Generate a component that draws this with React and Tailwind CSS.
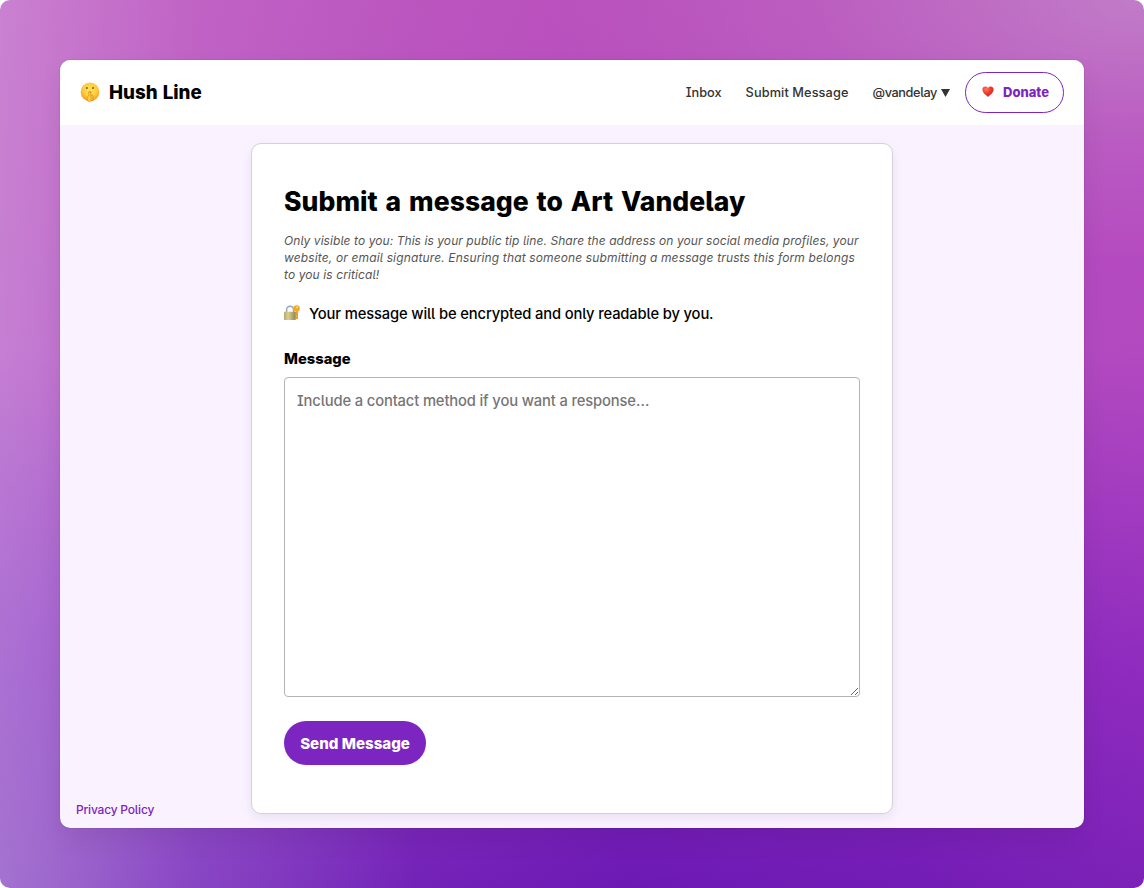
function HushFace() {
  return (
    <svg className="size-5 shrink-0 -translate-y-px" viewBox="0 0 20 20" aria-hidden="true">
      <defs>
        <radialGradient id="face" cx="50%" cy="40%" r="60%">
          <stop offset="0" stopColor="#ffe55c" />
          <stop offset="0.65" stopColor="#ffc93a" />
          <stop offset="1" stopColor="#ee961c" />
        </radialGradient>
      </defs>
      <circle cx="10" cy="9.9" r="9.3" fill="url(#face)" />
      <ellipse cx="6.9" cy="6" rx="0.8" ry="1" fill="#61401b" />
      <ellipse cx="13" cy="6" rx="0.8" ry="1" fill="#61401b" />
      <path d="M8.2 10.4Q10 9.6 11.8 10.4" fill="none" stroke="#b87a24" strokeWidth="0.6" />
      <path d="M9.2 9.6q.7-1 1.4 0l.1 4.1 1.5-.7q1.4.5.9 2.3-.3 3.7-3.7 4.4-2.3-.5-2.4-2.6-.1-2 1.6-3.4z" fill="#ffcb40" stroke="#d98518" strokeWidth="0.6" />
      <path d="M10.3 14.4l1.8-.3M10.2 15.9l2-.3M10 17.3l1.7-.2" stroke="#d08420" strokeWidth="0.5" />
    </svg>
  );
}

function LockAndKey() {
  return (
    <svg className="size-4 shrink-0" viewBox="0 0 16 16" aria-hidden="true">
      <defs>
        <linearGradient id="lock" x1="0" x2="1">
          <stop offset="0" stopColor="#b3a967" />
          <stop offset="0.35" stopColor="#d9d097" />
          <stop offset="1" stopColor="#8f8749" />
        </linearGradient>
      </defs>
      <path d="M2.6 7.4V4.7a3.5 3.5 0 0 1 7 0v2.7" fill="none" stroke="#93a7b5" strokeWidth="1.5" />
      <rect x="0" y="6.7" width="11.8" height="8.3" rx="0.8" fill="url(#lock)" />
      <path d="M12 5.5h2v8l-1 1.1-1.1-1.1v-1.2l.6-.6-.5-.7z" fill="#e3a02b" />
      <circle cx="12.6" cy="3.6" r="3.3" fill="#eeaa35" />
      <circle cx="13" cy="2.3" r="0.8" fill="#fff4d3" />
    </svg>
  );
}

function Heart() {
  return (
    <svg className="h-[11px] w-3 shrink-0 -translate-y-px" viewBox="0 0 12 11" aria-hidden="true">
      <defs>
        <radialGradient id="heart" cx="35%" cy="25%" r="75%">
          <stop offset="0" stopColor="#ff7864" />
          <stop offset="0.5" stopColor="#f33c2e" />
          <stop offset="1" stopColor="#d91f1b" />
        </radialGradient>
      </defs>
      <path d="M6 10.9C4.4 9.5.4 6.8.4 3.5.4.2 4.6-.4 6 2.1 7.4-.4 11.6.2 11.6 3.5c0 3.3-4 6-5.6 7.4z" fill="url(#heart)" />
    </svg>
  );
}

export default function App() {
  return (
    <div className="h-[888px] w-[1144px] overflow-hidden rounded-[10px] bg-[radial-gradient(ellipse_600px_260px_at_100%_0%,rgba(205,200,215,0.38),rgba(205,200,215,0.12)_55%,transparent),radial-gradient(ellipse_420px_560px_at_0%_100%,rgba(175,150,215,0.3),rgba(165,140,220,0.16)_50%,transparent),linear-gradient(to_right,rgba(225,195,235,0.43),rgba(225,190,235,0.18)_17%,rgba(225,190,235,0.06)_36%,rgba(225,190,235,0)_55%),linear-gradient(to_left,rgba(190,70,195,0.2),rgba(190,70,195,0.08)_20%,transparent_45%),linear-gradient(to_bottom,#b94fbc_0%,#b04ac0_40%,#8425bd_75%,#6c19b4_100%)] p-[60px] font-['Inter',sans-serif] [font-weight:450] text-black [font-feature-settings:'cv05','cv08']">
      <div className="flex h-[768px] w-[1024px] flex-col overflow-hidden rounded-[10px] bg-[#faf3ff] shadow-[0_0_1px_rgba(0,0,0,0.5),0_12px_24px_rgba(0,0,0,0.07)]">
        <header className="flex h-[65px] shrink-0 items-center justify-between bg-white px-5">
          <a className="flex items-center gap-[9px]">
            <HushFace />
            <span className="pt-0.5 text-[18.75px] font-extrabold [word-spacing:1px]">Hush Line</span>
          </a>
          <nav className="flex items-center text-[12.75px] whitespace-nowrap text-[#333]">
            <a className="mr-6">Inbox</a>
            <a className="mr-6 tracking-[0.1px]">Submit Message</a>
            <a className="mr-[15px] flex items-center gap-1 tracking-[-0.4px]">
              @vandelay
              <svg className="h-2 w-[9px]" viewBox="0 0 9 8"><path d="M0 0h9L4.5 8z" fill="#333" /></svg>
            </a>
            <a className="flex h-[41px] w-[99px] items-center gap-[9px] rounded-full border border-[#7d25c1] pl-4 text-[13px] font-extrabold text-[#7d25c1]">
              <Heart />
              Donate
            </a>
          </nav>
        </header>
        <div className="flex grow flex-col items-center pt-[18px]">
          <main className="flex h-[671px] w-[642px] flex-col items-start rounded-[10px] border border-[#d6d0dc] bg-white px-8 pt-[39px] shadow-[0_4px_12px_rgba(80,30,110,0.09)]">
            <h1 className="text-[26.5px] leading-9 font-extrabold tracking-[0.05px] whitespace-nowrap [word-spacing:2px]">Submit a message to Art Vandelay</h1>
            <p className="mt-[13px] text-[12px] leading-[17px] whitespace-nowrap text-[#555] italic">
              <span className="block tracking-[0.07px]">Only visible to you: This is your public tip line. Share the address on your social media profiles, your</span>
              <span className="block tracking-[0.14px]">website, or email signature. Ensuring that someone submitting a message trusts this form belongs</span>
              <span className="block tracking-[0.1px]">to you is critical!</span>
            </p>
            <p className="mt-[19px] flex h-6 items-center gap-[9px] text-[14.75px] tracking-[-0.14px] whitespace-nowrap">
              <span className="-translate-y-px"><LockAndKey /></span>
              <span>Your message will be encrypted and only readable by you.</span>
            </p>
            <label className="mt-[21px] text-[14.75px] leading-6 font-extrabold">Message</label>
            <textarea
              className="mt-[6px] h-80 w-full shrink-0 resize rounded-[4px] border border-[#b3b3b3] bg-white px-3 py-[11px] text-[14.75px] leading-6 tracking-[-0.14px] placeholder:text-[#757575]"
              placeholder="Include a contact method if you want a response…"
            />
            <button className="mt-6 h-11 w-[142px] rounded-full bg-[#7d25c1] pt-0.5 text-[15.1px] font-extrabold whitespace-nowrap text-white">Send Message</button>
          </main>
        </div>
        <footer className="-mt-7 flex h-7 shrink-0 items-start px-4">
          <a className="text-[12px] leading-5 tracking-[-0.2px] whitespace-nowrap text-[#7d25c1]">Privacy Policy</a>
        </footer>
      </div>
    </div>
  );
}
